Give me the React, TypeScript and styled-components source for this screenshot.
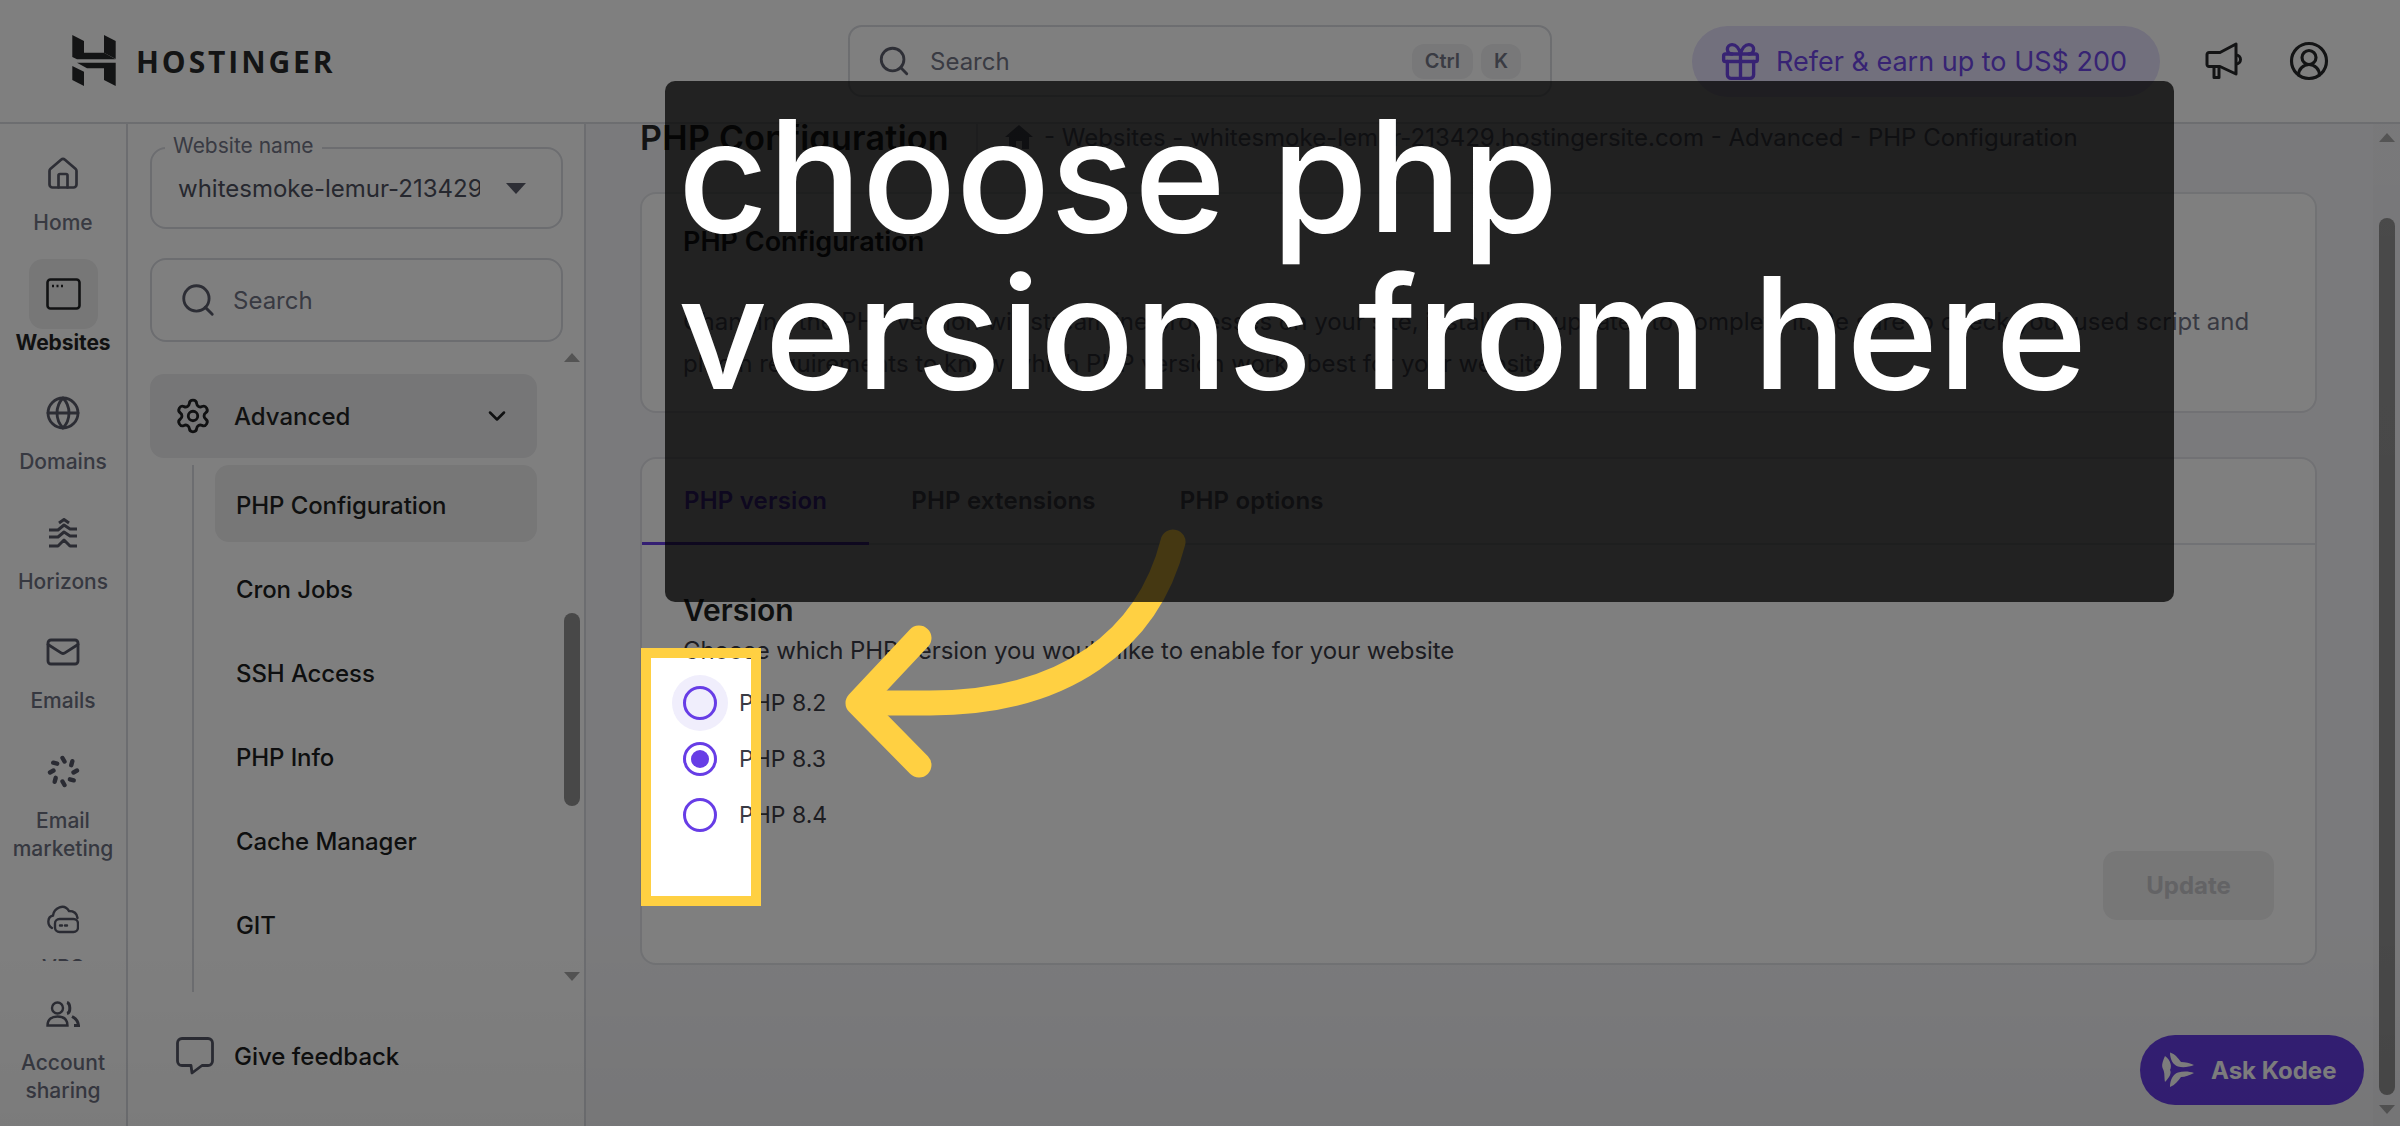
import React from "react";
import styled, { createGlobalStyle } from "styled-components";
import { ChevronDown, CircleUserRound, Gift, Globe, House, Mail, Search, Settings } from "lucide-react";

const FONT = `Inter, "Noto Sans", "Liberation Sans", sans-serif`;
const INK = "#1d1e20";
const MUTED = "#6d7081";
const PURPLE = "#673de6";
const LINE = "#d8dae0";

const GlobalStyle = createGlobalStyle`
  html, body { margin: 0; padding: 0; background: #fff; }
  * { box-sizing: border-box; }
  body { font-family: ${FONT}; color: ${INK}; }
`;

const Page = styled.div`
  position: relative;
  width: 2400px;
  height: 1126px;
  overflow: hidden;
  display: flex;
  flex-direction: column;
  background: #fff;
`;

/* ---------- top bar ---------- */
const TopBar = styled.header`
  height: 124px;
  flex: none;
  display: flex;
  align-items: center;
  padding-left: 72px;
  background: #fff;
  border-bottom: 2px solid ${LINE};
`;
const Brand = styled.div`
  width: 776px;
  display: flex;
  align-items: center;
  gap: 19px;
`;
const Wordmark = styled.span`
  font-family: "Open Sans", ${FONT};
  font-size: 30px;
  font-weight: 700;
  letter-spacing: 2.9px;
  color: ${INK};
`;
const TopSearch = styled.div`
  width: 704px;
  height: 72px;
  display: flex;
  align-items: center;
  gap: 19px;
  padding: 0 29px 0 27px;
  border: 2px solid ${LINE};
  border-radius: 14px;
  font-size: 24px;
  color: ${MUTED};
`;
const Grow = styled.span`
  flex: 1;
`;
const KeyGroup = styled.div`
  display: flex;
  gap: 8px;
`;
const Key = styled.span`
  height: 35px;
  padding: 0 13px;
  display: flex;
  align-items: center;
  border-radius: 12px;
  background: #f0f0f2;
  font-size: 20px;
  font-weight: 600;
  color: ${MUTED};
`;
const ReferPill = styled.div`
  width: 468px;
  height: 71px;
  margin-left: 140px;
  display: flex;
  align-items: center;
  gap: 13px;
  padding-left: 26px;
  border-radius: 36px;
  background: #e4dffb;
  color: ${PURPLE};
  font-size: 27px;
  white-space: nowrap;
`;
const TopIcon = styled.span<{ $gap: number }>`
  display: flex;
  margin-left: ${(p) => p.$gap}px;
  color: ${INK};
`;

/* ---------- layout ---------- */
const Body = styled.div`
  flex: 1;
  min-height: 0;
  display: flex;
`;

/* ---------- icon rail ---------- */
const Rail = styled.nav`
  width: 128px;
  flex: none;
  display: flex;
  flex-direction: column;
  background: #fff;
  border-right: 2px solid ${LINE};
`;
const RailList = styled.div`
  height: 837px;
  flex: none;
  overflow: hidden;
  display: flex;
  flex-direction: column;
  gap: 21.5px;
  padding-top: 15px;
`;
const RailFooter = styled.div`
  padding-top: 18px;
`;
const RailItem = styled.div`
  display: flex;
  flex-direction: column;
  align-items: center;
`;
const RailIcon = styled.div<{ $active?: boolean }>`
  width: 69px;
  height: 70px;
  display: flex;
  align-items: center;
  justify-content: center;
  border-radius: 14px;
  background: ${(p) => (p.$active ? "#eeeeef" : "transparent")};
  color: ${(p) => (p.$active ? INK : "#555766")};
`;
const RailLabel = styled.div<{ $active?: boolean }>`
  width: 127px;
  text-align: center;
  font-size: 21px;
  line-height: 28px;
  font-weight: ${(p) => (p.$active ? 700 : 500)};
  letter-spacing: ${(p) => (p.$active ? "-0.1px" : "0")};
  color: ${(p) => (p.$active ? INK : MUTED)};
`;

/* ---------- side menu ---------- */
const Menu = styled.aside`
  width: 458px;
  flex: none;
  display: flex;
  flex-direction: column;
  padding: 23px 0 0 22px;
  background: #fff;
  border-right: 2px solid ${LINE};
`;
const SelectBox = styled.div`
  position: relative;
  width: 413px;
  height: 82px;
  flex: none;
  display: flex;
  align-items: center;
  padding-left: 26px;
  border: 2px solid ${LINE};
  border-radius: 16px;
`;
const SelectLegend = styled.span`
  position: absolute;
  left: 13px;
  top: -16px;
  padding: 0 8px;
  background: #fff;
  font-size: 21px;
  line-height: 26px;
  color: ${MUTED};
`;
const SelectValue = styled.span`
  width: 302px;
  overflow: hidden;
  white-space: nowrap;
  font-size: 24px;
  color: #474a58;
`;
const Caret = styled.svg`
  margin-left: 26px;
  flex: none;
`;
const MenuSearch = styled.div`
  width: 413px;
  height: 84px;
  flex: none;
  margin-top: 29px;
  display: flex;
  align-items: center;
  gap: 16px;
  padding-left: 27px;
  border: 2px solid ${LINE};
  border-radius: 16px;
  font-size: 24px;
  color: ${MUTED};
`;
const ScrollArea = styled.div`
  height: 646px;
  flex: none;
  margin-top: 4px;
  display: flex;
  gap: 27px;
`;
const MenuList = styled.div`
  width: 387px;
  display: flex;
  flex-direction: column;
  padding-top: 28px;
  overflow: hidden;
`;
const AdvancedRow = styled.div`
  height: 84px;
  flex: none;
  display: flex;
  align-items: center;
  gap: 22px;
  padding: 0 26px 0 24px;
  border-radius: 14px;
  background: #ececee;
  font-size: 24px;
  font-weight: 500;
`;
const SubList = styled.div`
  flex: 1;
  margin: 7px 0 0 42px;
  padding-left: 21px;
  display: flex;
  flex-direction: column;
  gap: 7px;
  border-left: 2px solid ${LINE};
`;
const SubItem = styled.div<{ $active?: boolean }>`
  height: 77px;
  flex: none;
  display: flex;
  align-items: center;
  padding: 3px 0 0 21px;
  border-radius: 14px;
  background: ${(p) => (p.$active ? "#eeeeef" : "transparent")};
  font-size: 24px;
  font-weight: 500;
  letter-spacing: -0.1px;
`;
const Feedback = styled.div`
  height: 48px;
  flex: none;
  margin: 40px 0 0 26px;
  display: flex;
  align-items: center;
  gap: 20px;
  font-size: 24px;
  font-weight: 500;
`;

/* ---------- scrollbars ---------- */
const Track = styled.div<{ $width: number; $pad: number; $tint?: boolean }>`
  width: ${(p) => p.$width}px;
  flex: none;
  display: flex;
  flex-direction: column;
  align-items: center;
  padding-top: ${(p) => p.$pad}px;
  background: ${(p) => (p.$tint ? "#f1f1f4" : "transparent")};
`;
const Arrow = styled.div<{ $down?: boolean }>`
  width: 0;
  height: 0;
  flex: none;
  border-left: 8px solid transparent;
  border-right: 8px solid transparent;
  ${(p) => (p.$down ? "border-top: 9px solid #a6a6a6;" : "border-bottom: 9px solid #a6a6a6;")}
`;
const Thumb = styled.div<{ $before: number; $height: number; $after: number }>`
  width: 16px;
  flex: none;
  height: ${(p) => p.$height}px;
  margin: ${(p) => p.$before}px 0 ${(p) => p.$after}px;
  border-radius: 8px;
  background: #909090;
`;

/* ---------- main ---------- */
const Main = styled.main`
  flex: 1;
  min-width: 0;
  overflow: hidden;
  padding: 0 56px 0 54px;
  background: #f5f5f8;
`;
const TitleRow = styled.div`
  height: 36px;
  margin-top: -5px;
  display: flex;
  align-items: center;
  white-space: nowrap;
`;
const PageTitle = styled.h1`
  margin: 0;
  padding-right: 27px;
  font-size: 34px;
  font-weight: 600;
  letter-spacing: 0.3px;
`;
const Crumbs = styled.div`
  display: flex;
  align-items: center;
  gap: 11px;
  height: 36px;
  padding-left: 27px;
  border-left: 2px solid ${LINE};
  font-size: 24px;
  color: ${MUTED};
`;
const Card = styled.section`
  background: #fff;
  border: 2px solid #e2e3e8;
  border-radius: 16px;
`;
const IntroCard = styled(Card)`
  height: 221px;
  margin-top: 37px;
  padding: 32px 40px 0 41px;
`;
const CardTitle = styled.h2`
  margin: 0;
  font-size: 27px;
  line-height: 32px;
  font-weight: 600;
`;
const CardText = styled.p`
  margin: 43px 0 0;
  font-size: 24px;
  line-height: 42px;
  color: ${MUTED};
`;
const VersionCard = styled(Card)`
  height: 508px;
  margin-top: 44px;
`;
const Tabs = styled.div`
  height: 86px;
  display: flex;
  border-bottom: 2px solid #e3e4ea;
`;
const Tab = styled.div<{ $active?: boolean }>`
  height: 86px;
  padding: 0 42px;
  display: flex;
  align-items: center;
  font-size: 24px;
  font-weight: 600;
  letter-spacing: 0.2px;
  white-space: nowrap;
  color: ${(p) => (p.$active ? PURPLE : MUTED)};
  border-bottom: 3px solid ${(p) => (p.$active ? PURPLE : "transparent")};
`;
const TabBody = styled.div`
  padding: 47px 41px 0;
  display: flex;
  flex-direction: column;
`;
const SectionTitle = styled.h3`
  margin: 0;
  font-size: 30px;
  line-height: 36px;
  font-weight: 600;
`;
const SectionText = styled.p`
  margin: 7px 0 8px;
  font-size: 24px;
  line-height: 32px;
  letter-spacing: -0.09px;
  color: #3a3b44;
`;
const RadioRow = styled.div`
  height: 56px;
  display: flex;
  align-items: center;
  gap: 22px;
  font-size: 23px;
  color: #3a3b44;
`;
const RadioHalo = styled.span<{ $hover?: boolean }>`
  width: 56px;
  height: 56px;
  margin: 0 -11px;
  flex: none;
  display: flex;
  align-items: center;
  justify-content: center;
  border-radius: 50%;
  background: ${(p) => (p.$hover ? "#f0eefc" : "transparent")};
`;
const Radio = styled.span<{ $checked?: boolean }>`
  width: 34px;
  height: 34px;
  display: flex;
  align-items: center;
  justify-content: center;
  border: 3px solid ${PURPLE};
  border-radius: 50%;
  ${(p) =>
    p.$checked &&
    `&::after {
      content: "";
      width: 18px;
      height: 18px;
      border-radius: 50%;
      background: ${PURPLE};
    }`}
`;
const Actions = styled.div`
  display: flex;
  justify-content: flex-end;
  margin-top: 8px;
`;
const UpdateButton = styled.div`
  width: 171px;
  height: 69px;
  display: flex;
  align-items: center;
  justify-content: center;
  border-radius: 14px;
  background: #eeeeef;
  font-size: 24px;
  font-weight: 700;
  color: #c6c6ca;
`;

const AskKodee = styled.div`
  position: absolute;
  left: 2140px;
  top: 1035px;
  width: 224px;
  height: 70px;
  display: flex;
  align-items: center;
  gap: 14px;
  padding-left: 21px;
  border-radius: 35px;
  background: ${PURPLE};
  color: #fff;
  font-size: 24px;
  font-weight: 700;
  white-space: nowrap;
`;

/* ---------- tutorial overlay ---------- */
const Shade = styled.div`
  position: absolute;
  inset: 0;
  background: linear-gradient(
    rgba(255, 255, 255, 0.05) 0%,
    rgba(255, 255, 255, 0) 55%,
    rgba(0, 0, 0, 0) 82%,
    rgba(0, 0, 0, 0.03) 100%
  );
`;
const Spotlight = styled.div`
  position: absolute;
  left: 641px;
  top: 648px;
  width: 120px;
  height: 258px;
  border: 10px solid #ffd042;
  box-shadow: 0 0 0 3000px rgba(0, 0, 0, 0.5);
`;
const ArrowArt = styled.svg`
  position: absolute;
  left: 0;
  top: 0;
`;
const Callout = styled.div`
  position: absolute;
  left: 665px;
  top: 81px;
  width: 1509px;
  height: 521px;
  padding: 16px 0 0 13px;
  border-radius: 10px;
  background: rgba(0, 0, 0, 0.73);
  color: #fff;
  font-size: 156px;
  font-weight: 500;
  line-height: 157px;
  word-spacing: 4px;
  white-space: nowrap;
`;

const LogoMark = () => (
  <svg width="45" height="52" viewBox="12 10 45 52" fill={INK}>
    <polygon points="12.3,10 24,16 24,27.7 44,27.7 55.7,34.3 17,34.3 12.3,32" />
    <polygon points="44,10 55.7,16 55.7,34 44,27.7" />
    <polygon points="12.3,41 24,46.7 24,61 12.3,55" />
    <polygon points="17,37.7 55.7,37.7 55.7,61 44,55 44,43.3 27,43.3" />
  </svg>
);
const WindowIcon = () => (
  <svg width="35" height="32" viewBox="0 0 35 32" fill="none" stroke="currentColor">
    <rect x="1.5" y="1.5" width="32" height="29" rx="3" strokeWidth="2.6" />
    <path d="M6 8h2M10.5 8h2M15 8h2" strokeWidth="2.4" />
  </svg>
);
const HorizonsIcon = () => (
  <svg width="30" height="30" viewBox="0 0 30 30" fill="none" stroke="currentColor" strokeWidth="3" strokeLinejoin="round">
    <path d="M11 5l5-3.500 5 3.500" />
    <path d="M1 12h9l6-5 6 4h7" />
    <path d="M1 19h9l6-5 6 4h7" />
    <path d="M1 28h9l6-6 6 6h7" />
  </svg>
);
const SpinnerIcon = () => (
  <svg width="33" height="33" viewBox="0 0 33 33" stroke="currentColor" strokeWidth="4.4" strokeLinecap="round">
    {[0, 45, 90, 135, 180, 225, 270, 315].map((a) => (
      <line key={a} x1="15.5" y1="3" x2="17.5" y2="6.500" transform={`rotate(${a} 16.5 16.5)`} />
    ))}
  </svg>
);
const VpsIcon = () => (
  <svg width="32" height="30" viewBox="0 0 32 30" fill="none" stroke="currentColor" strokeWidth="2.4" strokeLinecap="round">
    <path d="M5 24C0 21 0 13 6 11.500C7 4 17 -1 22 7C27 7 30 10 30.500 14" />
    <rect x="8" y="15" width="23" height="13" rx="4.500" />
    <path d="M13 21.500h2M18 21.500h2" />
  </svg>
);
const SharingIcon = () => (
  <svg width="34" height="26" viewBox="0 0 34 26" fill="none" stroke="currentColor" strokeWidth="2.4">
    <circle cx="11.500" cy="7" r="5.500" />
    <path d="M1.500 24.500c0-6 4-9 10-9s10 3 10 9z" />
    <path d="M21 1.500c3.500 1 4 10 0 11" strokeWidth="3" />
    <path d="M26 15.500c3 1.500 6 4 6.500 9H28" strokeWidth="3" />
  </svg>
);
const Megaphone = () => (
  <svg width="39" height="38" viewBox="0 0 39 38" fill="none" stroke="currentColor" strokeWidth="3" strokeLinejoin="round">
    <path d="M2 12.500c0-1 1-2 2-2h11L31 2v30l-16-7.500H4c-1 0-2-1-2-2z" />
    <path d="M9 25v10.500h5V25" />
    <path d="M31 13a4.500 4.500 0 0 1 0 9" />
  </svg>
);
const Bubble = () => (
  <svg width="38" height="38" viewBox="0 0 38 38" fill="none" stroke="#555766" strokeWidth="2.8" strokeLinejoin="round">
    <path d="M6 1.500h26a4.500 4.500 0 0 1 4.500 4.500v18a4.500 4.500 0 0 1-4.500 4.500h-6L16 36l-1-7.500H6A4.500 4.500 0 0 1 1.500 24V6A4.500 4.500 0 0 1 6 1.500z" />
  </svg>
);
const SolidHome = () => (
  <svg width="28" height="26" viewBox="0 0 28 26" fill="currentColor">
    <path d="M14 1 0 13h4v12h7v-8h6v8h7V13h4z" />
  </svg>
);
const KodeeIcon = () => (
  <svg width="36" height="40" viewBox="10 10 36 40" fill="#fff">
    <path d="M14 16C20 20 21 27 19 30C21 33 18 38 14 42C13 36 14 33 12 29C10 25 12 21 14 16z" />
    <path d="M19 12.500C24 14 27 18 30 22C34 22 39 23 43 25C38 27 32 28 27 26.500C22 25 19 19 19 12.500z" />
    <path d="M19 47C24 45 27 41 30 37C34 37 39 35 43 33C38 31 32 31 27 32.500C22 34 19 40 19 47z" />
  </svg>
);

const railTop = [
  { label: ["Home"], icon: <House size={36} strokeWidth={1.8} /> },
  { label: ["Websites"], icon: <WindowIcon />, active: true },
  { label: ["Domains"], icon: <Globe size={36} strokeWidth={1.9} /> },
  { label: ["Horizons"], icon: <HorizonsIcon /> },
  { label: ["Emails"], icon: <Mail size={36} strokeWidth={1.9} /> },
  { label: ["Email", "marketing"], icon: <SpinnerIcon /> },
  { label: ["VPS"], icon: <VpsIcon /> },
];
const subItems = ["PHP Configuration", "Cron Jobs", "SSH Access", "PHP Info", "Cache Manager", "GIT"];
const versions = ["PHP 8.2", "PHP 8.3", "PHP 8.4"];

export default function App() {
  return (
    <Page>
      <GlobalStyle />
      <TopBar>
        <Brand>
          <LogoMark />
          <Wordmark>HOSTINGER</Wordmark>
        </Brand>
        <TopSearch>
          <Search size={34} strokeWidth={2} color="#555766" />
          <span>Search</span>
          <Grow />
          <KeyGroup>
            <Key>Ctrl</Key>
            <Key>K</Key>
          </KeyGroup>
        </TopSearch>
        <ReferPill>
          <Gift size={45} strokeWidth={1.8} />
          Refer &amp; earn up to US$ 200
        </ReferPill>
        <TopIcon $gap={45}>
          <Megaphone />
        </TopIcon>
        <TopIcon $gap={44}>
          <CircleUserRound size={42} strokeWidth={1.8} />
        </TopIcon>
      </TopBar>
      <Body>
        <Rail>
          <RailList>
            {railTop.map((item) => (
              <RailItem key={item.label[0]}>
                <RailIcon $active={item.active}>{item.icon}</RailIcon>
                {item.label.map((line) => (
                  <RailLabel key={line} $active={item.active}>
                    {line}
                  </RailLabel>
                ))}
              </RailItem>
            ))}
          </RailList>
          <RailFooter>
            <RailItem>
              <RailIcon>
                <SharingIcon />
              </RailIcon>
              <RailLabel>Account</RailLabel>
              <RailLabel>sharing</RailLabel>
            </RailItem>
          </RailFooter>
        </Rail>
        <Menu>
          <SelectBox>
            <SelectLegend>Website name</SelectLegend>
            <SelectValue>whitesmoke-lemur-213429.hostingersite.com</SelectValue>
            <Caret width="20" height="11" viewBox="0 0 20 11" fill="#555766">
              <path d="M0 0h20L10 11z" />
            </Caret>
          </SelectBox>
          <MenuSearch>
            <Search size={38} strokeWidth={1.8} color="#555766" />
            Search
          </MenuSearch>
          <ScrollArea>
            <MenuList>
              <AdvancedRow>
                <Settings size={38} strokeWidth={1.8} />
                <Grow>Advanced</Grow>
                <ChevronDown size={28} strokeWidth={2.2} />
              </AdvancedRow>
              <SubList>
                {subItems.map((item, i) => (
                  <SubItem key={item} $active={i === 0}>
                    {item}
                  </SubItem>
                ))}
              </SubList>
            </MenuList>
            <Track $width={16} $pad={7}>
              <Arrow />
              <Thumb $before={251} $height={193} $after={166} />
              <Arrow $down />
            </Track>
          </ScrollArea>
          <Feedback>
            <Bubble />
            Give feedback
          </Feedback>
        </Menu>
        <Main>
          <TitleRow>
            <PageTitle>PHP Configuration</PageTitle>
            <Crumbs>
              <SolidHome />
              - Websites - whitesmoke-lemur-213429.hostingersite.com - Advanced - PHP Configuration
            </Crumbs>
          </TitleRow>
          <IntroCard>
            <CardTitle>PHP Configuration</CardTitle>
            <CardText>
              Changing the PHP version will streamline processes on your site, install PHP updates to complete it. Be sure to check your used script and
              plugin requirements to know which PHP version works best for your website.
            </CardText>
          </IntroCard>
          <VersionCard>
            <Tabs>
              <Tab $active>PHP version</Tab>
              <Tab>PHP extensions</Tab>
              <Tab>PHP options</Tab>
            </Tabs>
            <TabBody>
              <SectionTitle>Version</SectionTitle>
              <SectionText>Choose which PHP version you would like to enable for your website</SectionText>
              {versions.map((v, i) => (
                <RadioRow key={v}>
                  <RadioHalo $hover={i === 0}>
                    <Radio $checked={i === 1} />
                  </RadioHalo>
                  {v}
                </RadioRow>
              ))}
              <Actions>
                <UpdateButton>Update</UpdateButton>
              </Actions>
            </TabBody>
          </VersionCard>
        </Main>
        <Track $width={27} $pad={9} $tint>
          <Arrow />
          <Thumb $before={76} $height={877} $after={10} />
          <Arrow $down />
        </Track>
      </Body>
      <AskKodee>
        <KodeeIcon />
        Ask Kodee
      </AskKodee>
      <Shade />
      <Spotlight />
      <ArrowArt width="2400" height="1126" viewBox="0 0 2400 1126" fill="none" stroke="#ffd042" strokeWidth="25" strokeLinecap="round" strokeLinejoin="round">
        <path d="M1173 542C1148 640 1065 703 930 703H862" />
        <path d="M919 638 858 703 919 765" />
      </ArrowArt>
      <Callout>
        choose php
        <br />
        versions from here
      </Callout>
    </Page>
  );
}
